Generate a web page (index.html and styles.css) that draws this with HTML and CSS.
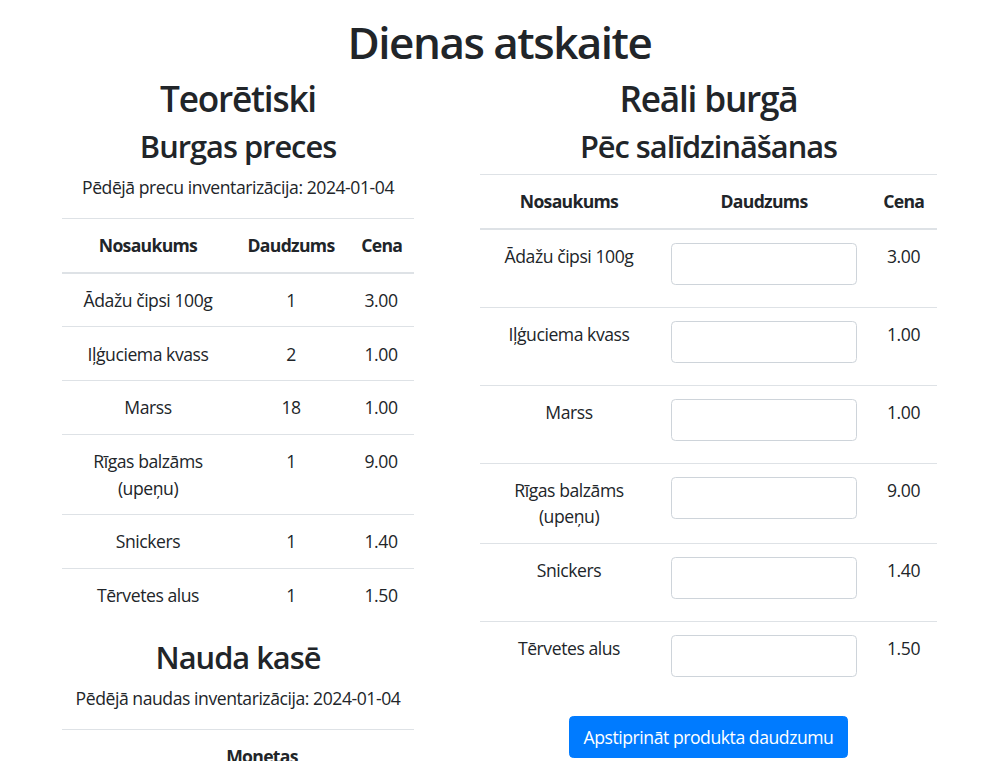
FILE: index.html
```html
<!DOCTYPE html>
<html lang="lv">
<head>
<meta charset="utf-8">
<title>Dienas atskaite</title>
<link rel="stylesheet" href="styles.css">
</head>
<body>
<div class="page">
  <h1 class="title">Dienas atskaite</h1>
  <div class="columns">
    <section class="col col-left">
      <h2>Teorētiski</h2>
      <h3>Burgas preces</h3>
      <p>Pēdējā precu inventarizācija: 2024-01-04</p>
      <table class="tbl tbl-left">
        <thead>
          <tr><th class="c1">Nosaukums</th><th class="c2">Daudzums</th><th class="c3">Cena</th></tr>
        </thead>
        <tbody>
          <tr><td>Ādažu čipsi 100g</td><td>1</td><td>3.00</td></tr>
          <tr><td>Iļģuciema kvass</td><td>2</td><td>1.00</td></tr>
          <tr><td>Marss</td><td>18</td><td>1.00</td></tr>
          <tr><td>Rīgas balzāms (upeņu)</td><td>1</td><td>9.00</td></tr>
          <tr><td>Snickers</td><td>1</td><td>1.40</td></tr>
          <tr><td>Tērvetes alus</td><td>1</td><td>1.50</td></tr>
        </tbody>
      </table>
      <h3>Nauda kasē</h3>
      <p>Pēdējā naudas inventarizācija: 2024-01-04</p>
      <table class="tbl tbl-money">
        <thead>
          <tr><th class="m1"></th><th>Monetas</th></tr>
        </thead>
      </table>
    </section>
    <section class="col col-right">
      <h2>Reāli burgā</h2>
      <h3>Pēc salīdzināšanas</h3>
      <form class="form">
        <table class="tbl tbl-right">
          <thead>
            <tr><th class="r1">Nosaukums</th><th class="r2">Daudzums</th><th class="r3">Cena</th></tr>
          </thead>
          <tbody>
            <tr><td>Ādažu čipsi 100g</td><td><input class="field" type="text"></td><td>3.00</td></tr>
            <tr><td>Iļģuciema kvass</td><td><input class="field" type="text"></td><td>1.00</td></tr>
            <tr><td>Marss</td><td><input class="field" type="text"></td><td>1.00</td></tr>
            <tr><td>Rīgas balzāms (upeņu)</td><td><input class="field" type="text"></td><td>9.00</td></tr>
            <tr><td>Snickers</td><td><input class="field" type="text"></td><td>1.40</td></tr>
            <tr><td>Tērvetes alus</td><td><input class="field" type="text"></td><td>1.50</td></tr>
          </tbody>
        </table>
        <div class="actions">
          <button class="btn" type="button">Apstiprināt produkta daudzumu</button>
        </div>
      </form>
    </section>
  </div>
</div>
</body>
</html>
```

FILE: styles.css
```css
* { box-sizing: border-box; }
html, body { margin: 0; padding: 0; background: #fff; }
body {
  font-family: "Open Sans", "Noto Sans", sans-serif;
  font-size: 17.6px;
  line-height: 1.5;
  letter-spacing: -0.45px;
  color: #212529;
}
.page {
  width: 875px;
  margin-left: 62px;
  padding-top: 15.6px;
}
h1, h2, h3 {
  margin: 0 0 8.8px;
  font-weight: 600;
  line-height: 1.2;
  text-align: center;
}
.title { font-size: 44px; letter-spacing: -1.5px; }
h2 { font-size: 35.2px; letter-spacing: -1.2px; }
h3 { font-size: 30.8px; letter-spacing: -1px; }
p { margin: 0 0 17.6px; text-align: center; }
.columns {
  display: flex;
  justify-content: space-between;
  align-items: flex-start;
}
.col-left { width: 352px; }
.col-right { width: 457px; }
.tbl {
  width: 100%;
  border-collapse: collapse;
  margin-bottom: 17.6px;
}
.tbl th, .tbl td {
  padding: 13.2px;
  text-align: center;
  vertical-align: top;
  border-top: 1px solid #dee2e6;
}
.tbl th { font-weight: 700; letter-spacing: -0.7px; }
.tbl thead th {
  vertical-align: bottom;
  border-bottom: 2px solid #dee2e6;
}
.tbl-left { table-layout: fixed; }
.c1 { width: 172px; }
.c2 { width: 114px; }
.c3 { width: 66px; }
.tbl-right { table-layout: fixed; }
.r1 { width: 178px; }
.r2 { width: 212px; }
.r3 { width: 67px; }
.tbl-money { table-layout: fixed; }
.m1 { width: 48px; }
.field {
  display: block;
  width: 100%;
  height: 41.8px;
  margin-bottom: 8.8px;
  padding: 6.6px 13.2px;
  font: inherit;
  color: #495057;
  background: #fff;
  border: 1px solid #ced4da;
  border-radius: 4.4px;
}
.form { margin: 0; }
.actions { display: flex; justify-content: center; }
.btn {
  font: inherit;
  letter-spacing: -0.45px;
  color: #fff;
  background: #007bff;
  border: 1px solid #007bff;
  border-radius: 4.4px;
  padding: 6.6px 13.2px;
  line-height: 1.5;
  cursor: pointer;
}
```
